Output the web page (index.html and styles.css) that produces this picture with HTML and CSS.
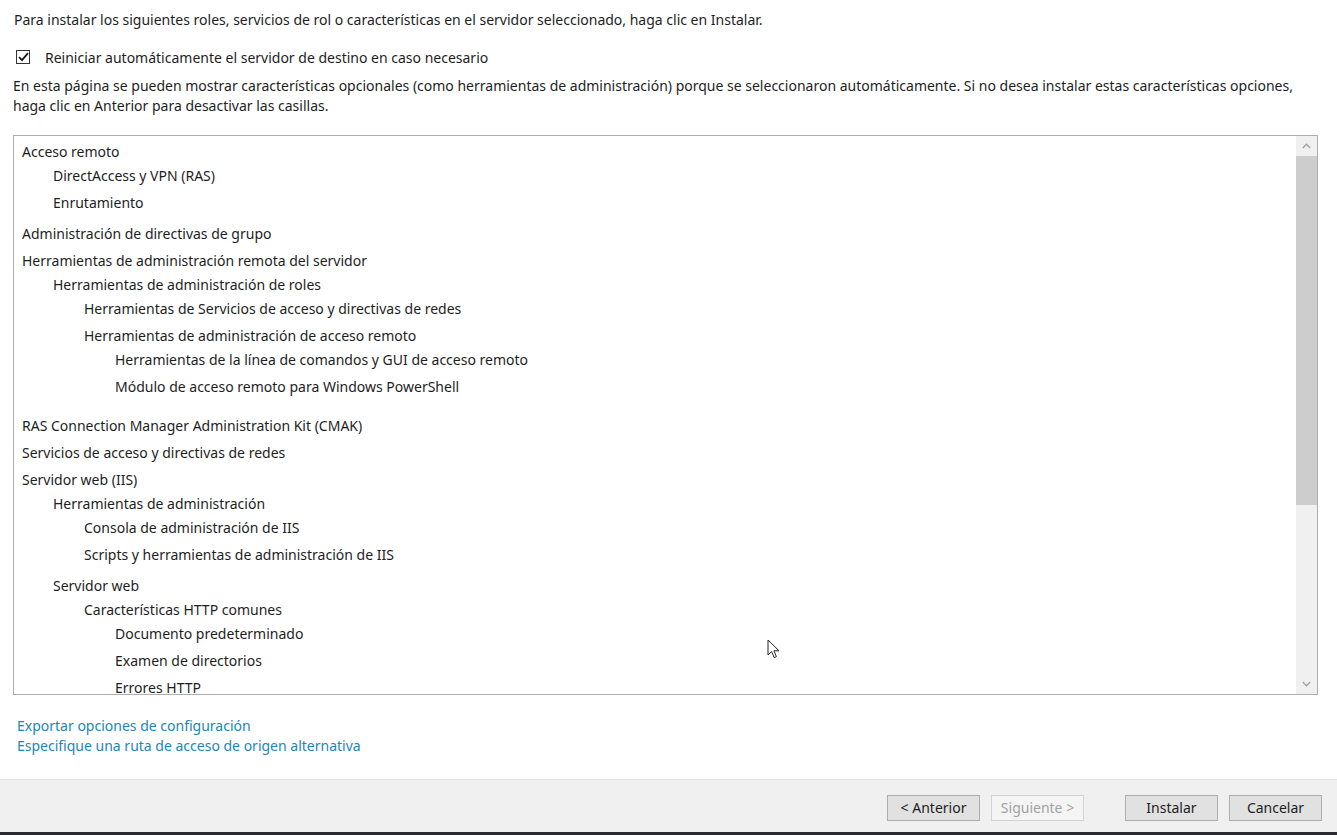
FILE: index.html
```html
<!DOCTYPE html>
<html lang="es">
<head>
<meta charset="utf-8">
<title>Confirmar selecciones de instalación</title>
<link rel="stylesheet" href="styles.css">
</head>
<body>
<div class="content">
  <p class="intro">Para instalar los siguientes roles, servicios de rol o características en el servidor seleccionado, haga clic en Instalar.</p>
  <label class="check">
    <span class="box"><svg width="11" height="10" viewBox="0 0 11 10"><path d="M1 5.2 L4 8.2 L10 1.2" fill="none" stroke="#1a1a1a" stroke-width="1.8"/></svg></span>
    <span>Reiniciar automáticamente el servidor de destino en caso necesario</span>
  </label>
  <p class="note">En esta página se pueden mostrar características opcionales (como herramientas de administración) porque se seleccionaron automáticamente. Si no desea instalar estas características opciones, haga clic en Anterior para desactivar las casillas.</p>

  <div class="listbox">
    <div class="tree">
      <div class="group">
        <div class="head">Acceso remoto</div>
        <div class="kids">
          <div class="leaf">DirectAccess y VPN (RAS)</div>
          <div class="leaf">Enrutamiento</div>
        </div>
      </div>
      <div class="leaf">Administración de directivas de grupo</div>
      <div class="group">
        <div class="head">Herramientas de administración remota del servidor</div>
        <div class="kids">
          <div class="group">
            <div class="head">Herramientas de administración de roles</div>
            <div class="kids">
              <div class="leaf">Herramientas de Servicios de acceso y directivas de redes</div>
              <div class="group">
                <div class="head">Herramientas de administración de acceso remoto</div>
                <div class="kids">
                  <div class="leaf">Herramientas de la línea de comandos y GUI de acceso remoto</div>
                  <div class="leaf">Módulo de acceso remoto para Windows PowerShell</div>
                </div>
              </div>
            </div>
          </div>
        </div>
      </div>
      <div class="leaf">RAS Connection Manager Administration Kit (CMAK)</div>
      <div class="leaf">Servicios de acceso y directivas de redes</div>
      <div class="group">
        <div class="head">Servidor web (IIS)</div>
        <div class="kids">
          <div class="group">
            <div class="head">Herramientas de administración</div>
            <div class="kids">
              <div class="leaf">Consola de administración de IIS</div>
              <div class="leaf">Scripts y herramientas de administración de IIS</div>
            </div>
          </div>
          <div class="group">
            <div class="head">Servidor web</div>
            <div class="kids">
              <div class="group">
                <div class="head">Características HTTP comunes</div>
                <div class="kids">
                  <div class="leaf">Documento predeterminado</div>
                  <div class="leaf">Examen de directorios</div>
                  <div class="leaf">Errores HTTP</div>
                </div>
              </div>
            </div>
          </div>
        </div>
      </div>
    </div>
    <div class="scrollbar">
      <div class="arrow"><svg width="9" height="6" viewBox="0 0 9 6"><path d="M0.8 5 L4.5 1.3 L8.2 5" fill="none" stroke="#a3a3a3" stroke-width="1.4"/></svg></div>
      <div class="thumb"></div>
      <div class="track"></div>
      <div class="arrow"><svg width="9" height="6" viewBox="0 0 9 6"><path d="M0.8 1 L4.5 4.7 L8.2 1" fill="none" stroke="#a3a3a3" stroke-width="1.4"/></svg></div>
    </div>
  </div>

  <div class="links">
    <a href="#">Exportar opciones de configuración</a>
    <a href="#">Especifique una ruta de acceso de origen alternativa</a>
  </div>
</div>

<div class="footer">
  <button class="btn">&lt; Anterior</button>
  <button class="btn disabled">Siguiente &gt;</button>
  <button class="btn wide-gap">Instalar</button>
  <button class="btn">Cancelar</button>
</div>
<div class="taskedge"></div>

<svg class="cursor" width="14" height="22" viewBox="0 0 14 22"><path d="M1 1 L1 16 L4.6 12.6 L7.2 18.6 L9.4 17.6 L6.9 11.8 L12 11.8 Z" fill="#fff" stroke="#222" stroke-width="1"/></svg>
</body>
</html>
```

FILE: styles.css
```css
html, body {
  margin: 0;
  padding: 0;
}
body {
  width: 1337px;
  height: 835px;
  overflow: hidden;
  background: #ffffff;
  font-family: "Noto Sans", "Open Sans", sans-serif;
  font-size: 14px;
  color: #1e1e1e;
  position: relative;
}
.content {
  height: 779px;
  display: flex;
  flex-direction: column;
}
.intro {
  margin: 11px 0 0 14px;
  line-height: 18px;
  white-space: nowrap;
}
.check {
  display: flex;
  align-items: center;
  margin: 19px 0 0 16px;
  height: 18px;
}
.box {
  width: 12px;
  height: 12px;
  border: 1px solid #333;
  display: flex;
  align-items: center;
  justify-content: center;
  margin-right: 15px;
}
.note {
  margin: 10px 20px 0 13px;
  line-height: 20px;
}
.listbox {
  margin: 19px 19px 0 13px;
  height: 558px;
  border: 1px solid #adadad;
  display: flex;
  overflow: hidden;
}
.tree {
  flex: 1;
  padding: 4px 0 0 8px;
  overflow: hidden;
}
.head {
  height: 24px;
  line-height: 24px;
  white-space: nowrap;
}
.leaf {
  height: 24px;
  line-height: 24px;
  padding-bottom: 3px;
  white-space: nowrap;
}
.kids {
  padding-left: 31px;
}
.group {
  padding-bottom: 4px;
}
.scrollbar {
  width: 21px;
  background: #f0f0f0;
  display: flex;
  flex-direction: column;
}
.arrow {
  height: 20px;
  display: flex;
  align-items: center;
  justify-content: center;
}
.thumb {
  height: 349px;
  background: #cdcdcd;
}
.track {
  flex: 1;
}
.links {
  margin: 21px 0 0 17px;
  display: flex;
  flex-direction: column;
}
.links a {
  color: #1d86b8;
  text-decoration: none;
  line-height: 20px;
}
.footer {
  height: 52px;
  background: #f0f0f0;
  border-top: 1px solid #dfdfdf;
  display: flex;
  justify-content: flex-end;
  align-items: center;
  padding-right: 15px;
  gap: 11px;
}
.btn {
  box-sizing: border-box;
  width: 93px;
  height: 26px;
  background: #e1e1e1;
  border: 1px solid #adadad;
  font-family: inherit;
  font-size: 14px;
  color: #1e1e1e;
  padding: 0;
  margin-top: 3px;
}
.btn.disabled {
  background: #f4f4f4;
  border-color: #d3d3d3;
  color: #a2a2a2;
}
.btn.wide-gap {
  margin-left: 30px;
}
.taskedge {
  height: 3px;
  background: #2a2a30;
}
.cursor {
  position: absolute;
  left: 767px;
  top: 639px;
}
```
